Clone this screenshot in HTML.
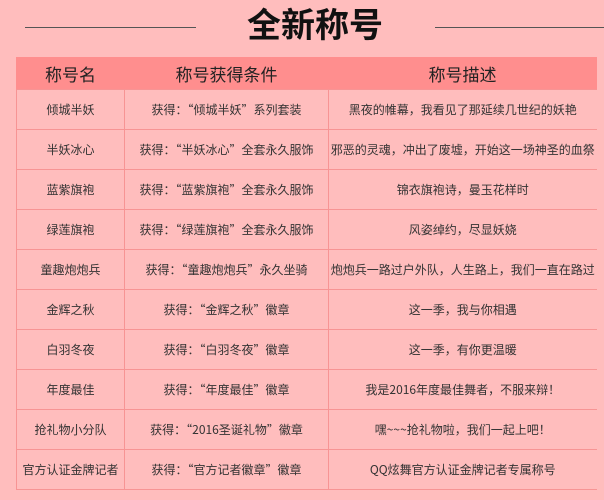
<!DOCTYPE html>
<html><head><meta charset="utf-8"><style>
body{margin:0;width:604px;height:500px;background:#ffbdbd;overflow:hidden;font-family:"Liberation Sans","Noto Sans CJK SC",sans-serif;position:relative}
.l{position:absolute;top:27px;height:1px;background:#555}
.t{position:absolute;left:0;width:630px;top:4px;text-align:center;font-size:34px;font-weight:bold;color:#111;line-height:44px}
table{position:absolute;left:16px;top:57px;border-collapse:collapse;table-layout:fixed;width:580px}
td,th{border:1px solid #f79494;text-align:center;color:#333;font-size:12px;height:39px;padding:0;white-space:nowrap;overflow:visible;font-family:"Noto Sans CJK SC","Liberation Sans",sans-serif}
td:last-child{border-right:none}
th{background:#ff8e8e;font-weight:normal;font-size:17px;height:31px;border-color:#ff8e8e;border-bottom-color:#f79494;color:#222}
</style></head><body>
<div class="l" style="left:25px;width:171px"></div>
<div class="l" style="left:435px;width:169px"></div>
<div class="t">全新称号</div>
<table>
<colgroup><col style="width:108px"><col style="width:204px"><col style="width:268px"></colgroup>
<tr><th>称号名</th><th>称号获得条件</th><th>称号描述</th></tr>
<tr><td>倾城半妖</td><td>获得：“倾城半妖”系列套装</td><td>黑夜的帷幕，我看见了那延续几世纪的妖艳</td></tr>
<tr><td>半妖冰心</td><td>获得：“半妖冰心”全套永久服饰</td><td>邪恶的灵魂，冲出了废墟，开始这一场神圣的血祭</td></tr>
<tr><td>蓝紫旗袍</td><td>获得：“蓝紫旗袍”全套永久服饰</td><td>锦衣旗袍诗，曼玉花样时</td></tr>
<tr><td>绿莲旗袍</td><td>获得：“绿莲旗袍”全套永久服饰</td><td>风姿绰约，尽显妖娆</td></tr>
<tr><td>童趣炮炮兵</td><td>获得：“童趣炮炮兵”永久坐骑</td><td>炮炮兵一路过户外队，人生路上，我们一直在路过</td></tr>
<tr><td>金辉之秋</td><td>获得：“金辉之秋”徽章</td><td>这一季，我与你相遇</td></tr>
<tr><td>白羽冬夜</td><td>获得：“白羽冬夜”徽章</td><td>这一季，有你更温暖</td></tr>
<tr><td>年度最佳</td><td>获得：“年度最佳”徽章</td><td>我是2016年度最佳舞者，不服来辩！</td></tr>
<tr><td>抢礼物小分队</td><td>获得：“2016圣诞礼物”徽章</td><td>嘿~~~抢礼物啦，我们一起上吧！</td></tr>
<tr><td>官方认证金牌记者</td><td>获得：“官方记者徽章”徽章</td><td>QQ炫舞官方认证金牌记者专属称号</td></tr>
</table>
</body></html>
